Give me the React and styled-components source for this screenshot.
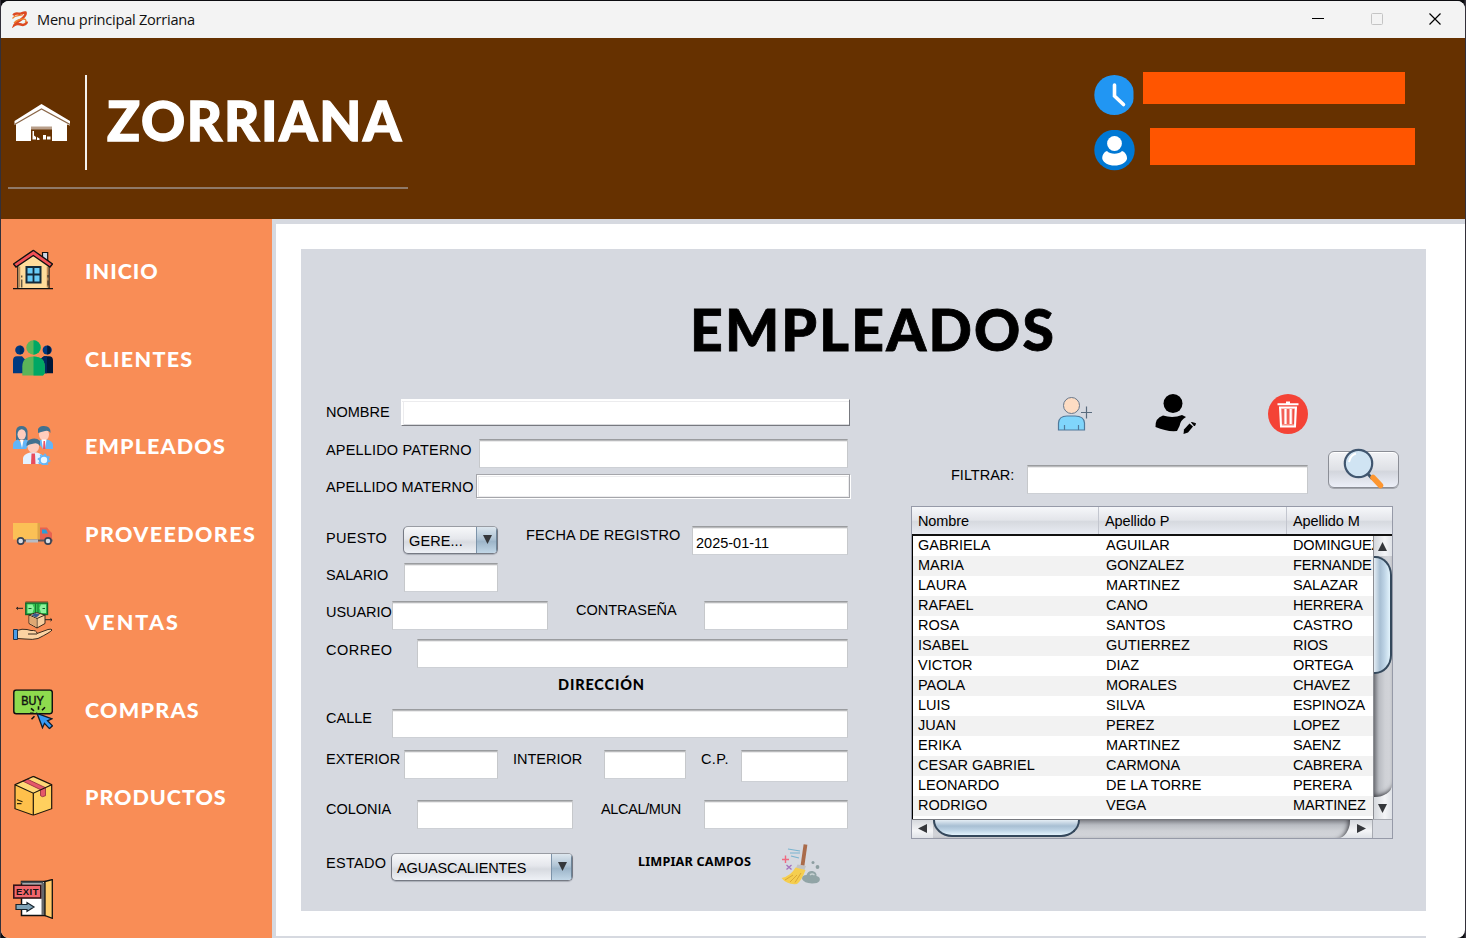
import React from "react";
import styled, { createGlobalStyle } from "styled-components";

const Global = createGlobalStyle`
  * { box-sizing: border-box; }
  html, body { margin: 0; padding: 0; background: #0c0c10; overflow: hidden; }
`;

const grey = "#d6d9e0";

/* ---------- window frame ---------- */
const Desktop = styled.div`
  width: 1466px;
  height: 938px;
  padding: 1px 1px 0 1px;
  background: linear-gradient(to right, #33303a 0 1px, #0c0c10 1px 1464px, #33303a 1465px);
  font-family: "Liberation Sans", Arial, sans-serif;
  color: #000;
`;
const Window = styled.div`
  display: flex;
  flex-direction: column;
  height: 937px;
  border-radius: 8px;
  overflow: hidden;
  background: #fff;
`;
const TitleBar = styled.header`
  flex: none;
  display: flex;
  align-items: center;
  height: 37px;
  padding: 0 24px 2px 10px;
  background: #f3f3f3;
`;
const TitleText = styled.span`
  flex: 1;
  margin-left: 8px;
  font: 14.6px/20px "Open Sans", "Noto Sans", sans-serif;
  letter-spacing: -0.25px;
  color: #111;
`;
const WindowButtons = styled.div`
  display: flex;
  gap: 46.5px;
`;

/* ---------- brand header ---------- */
const Header = styled.section`
  flex: none;
  display: flex;
  justify-content: space-between;
  height: 181px;
  background: #663100;
`;
const Brand = styled.div`
  width: 400px;
  height: 151px;
  margin-left: 7px;
  padding: 37px 0 0 6px;
  border-bottom: 2px solid #8f7968;
  display: flex;
  align-items: flex-start;
`;
const BrandRule = styled.div`
  width: 2px;
  height: 95px;
  margin: 0 20px 0 15px;
  background: #f4f1ee;
`;
const BrandHouse = styled.div`
  width: 56px;
  height: 38px;
  margin-top: 29px;
`;
const BrandName = styled.div`
  margin-top: 15px;
  font: 900 54.5px/60px Lato, "Open Sans", sans-serif;
  letter-spacing: 1.7px;
  color: #fff;
  -webkit-text-stroke: 1.3px #fff;
  white-space: nowrap;
`;
const StatusList = styled.div`
  width: 371px;
  padding-top: 34px;
`;
const StatusRow = styled.div`
  display: flex;
  align-items: flex-start;
  height: 56px;
`;
const StatusIcon = styled.div`
  width: 41px;
  height: 41px;
  margin-top: ${(p) => p.$top}px;
`;
const StatusBar = styled.div`
  width: ${(p) => p.$w}px;
  height: ${(p) => p.$h}px;
  margin-left: ${(p) => p.$gap}px;
  background: #ff5500;
`;

/* ---------- main split ---------- */
const Main = styled.div`
  flex: 1;
  display: flex;
  min-height: 0;
`;
const Sidebar = styled.nav`
  flex: none;
  width: 271px;
  padding-top: 8px;
  background: #f98d56;
`;
const NavItem = styled.div`
  display: flex;
  align-items: center;
  height: 87.75px;
  padding-left: 12px;
`;
const NavIcon = styled.div`
  flex: none;
  width: 40px;
  height: 40px;
  margin-right: 32px;
  transform: translateY(${(p) => p.$shift || 0}px);
`;
const NavText = styled.span`
  font: 900 21.5px/28px Lato, "Open Sans", sans-serif;
  letter-spacing: ${(p) => p.$track}px;
  color: #fff;
  white-space: nowrap;
`;
const ExitItem = styled(NavItem)`
  height: 103px;
  padding-top: 12px;
`;
const Content = styled.main`
  flex: 1;
  display: flex;
  flex-direction: column;
  border-top: 5px solid ${grey};
  border-left: 4px solid ${grey};
  padding: 25px 39px 0 25px;
`;
const Panel = styled.section`
  height: 662px;
  background: ${grey};
`;
const BottomEdge = styled.div`
  height: 2px;
  margin: 25px 0 0 -25px;
  background: ${grey};
`;
const PageTitle = styled.h1`
  margin: 0 0 0 19px;
  padding-top: 45px;
  height: 143px;
  text-align: center;
  font: 900 57px/70px Lato, "Open Sans", sans-serif;
  letter-spacing: 2.2px;
  -webkit-text-stroke: 0.8px #000;
`;
const Columns = styled.div`
  display: flex;
`;

/* ---------- form ---------- */
const Form = styled.div`
  width: 585px;
  padding: 7px 0 0 25px;
`;
const Row = styled.div`
  display: flex;
  align-items: flex-start;
  height: ${(p) => p.$h}px;
`;
const Label = styled.label`
  flex: none;
  width: ${(p) => p.$w}px;
  margin-top: ${(p) => p.$top}px;
  font-size: 14.5px;
  line-height: 18px;
  letter-spacing: ${(p) => p.$track || 0}px;
  white-space: nowrap;
`;
const Field = styled.div`
  flex: none;
  width: ${(p) => p.$w - 2}px;
  height: ${(p) => p.$h || 29}px;
  margin: 0 ${(p) => (p.$gap || 0) + 1}px 0 1px;
  padding: 7px 0 0 3px;
  font-size: 14.5px;
  line-height: 18px;
  background: #fff;
  border: 1px solid #c6c8cb;
  border-top-color: #9a9c9f;
  border-bottom-color: #cdd0d5;
  box-shadow: inset 0 1px 0 #b9babc, inset 0 2px 0 #ebebec;
`;
const RaisedField = styled.div`
  width: 449px;
  height: 27px;
  background: #fff;
  border: 1px solid #fff;
  border-right-color: #77797f;
  border-bottom-color: #77797f;
  box-shadow: inset 0 1px 0 #fff, inset 0 2px 0 #ececee, inset 1px 0 0 #fff, inset 2px 0 0 #ececee, inset 0 -1px 0 #d9dadd;
`;
const EtchedField = styled.div`
  width: 374px;
  height: 24px;
  background: #fff;
  border: 1px solid #a5a6ab;
  box-shadow: 1px 1px 0 #fff, inset 1px 1px 0 #fff, inset 2px 2px 0 #ececee, inset -1px -1px 0 #ececee;
`;
const Combo = styled.div`
  flex: none;
  display: flex;
  width: ${(p) => p.$w}px;
  height: 28px;
  margin-right: ${(p) => p.$gap || 0}px;
  border: 1px solid #767a84;
  border-top-color: #999ca3;
  border-radius: 5px;
  box-shadow: 0 1px 1px #a9adb6;
  background: linear-gradient(#f7f8fa, #e5e7ec 45%, #d7dae0 58%, #eef1f6);
  overflow: hidden;
`;
const ComboText = styled.span`
  flex: 1;
  padding: 5px 0 0 5px;
  font-size: 14.5px;
  line-height: 18px;
  letter-spacing: ${(p) => p.$track || 0}px;
`;
const ComboArrow = styled.span`
  width: 21px;
  border-left: 1px solid #7c93a9;
  background: linear-gradient(#dce6ee, #b0c4d5 45%, #9db5c9 56%, #c2d7e7);
  box-shadow: inset -1px 0 0 #6d8498;
  padding: 8px 0 0 6px;
  line-height: 0;
`;
const SectionTitle = styled.h2`
  margin: 0 0 0 232px;
  padding-top: 7px;
  height: 40px;
  font: 900 14.5px/18px Lato, "Open Sans", sans-serif;
  letter-spacing: 0.85px;
`;
const ClearText = styled.span`
  width: 143px;
  margin-top: -1px;
  font: bold 12.7px/18px "Noto Sans", "Open Sans", sans-serif;
  letter-spacing: 0.15px;
`;
const ClearIcon = styled.div`
  width: 40px;
  height: 42px;
  margin-top: -9px;
`;

/* ---------- list side ---------- */
const ListSide = styled.div`
  width: 490px;
  padding-left: 25px;
`;
const Actions = styled.div`
  display: flex;
  align-items: flex-start;
  height: 57px;
  padding: 2px 0 0 145px;
`;
const ActionIcon = styled.div`
  width: 41px;
  height: 41px;
  margin-right: ${(p) => p.$gap}px;
`;
const Filter = styled.div`
  display: flex;
  align-items: flex-start;
  height: 57px;
  padding-left: 40px;
`;
const FilterSlot = styled.div`
  padding-top: 16px;
`;
const SearchButton = styled.div`
  flex: none;
  width: 71px;
  height: 37px;
  margin: 2px 0 0 19px;
  border: 1px solid #8b8e96;
  border-radius: 6px;
  box-shadow: 0 1px 0 #a3a6ad, inset 0 1px 0 #fff;
  background: linear-gradient(#f2f3f6, #dfe1e6 50%, #d3d6dd 56%, #eceff8);
`;
const SearchGlyph = styled.div`
  width: 40px;
  height: 41px;
  margin: -4px 0 0 14px;
`;

/* ---------- table ---------- */
const TableBox = styled.div`
  width: 482px;
  height: 333px;
  border: 1px solid #969aa8;
`;
const TableHead = styled.div`
  display: grid;
  grid-template-columns: 187px 188px 1fr;
  height: 29px;
  background: linear-gradient(#f6f7fa, #e3e5ea 48%, #d6d9df 54%, #e9ecf3);
  border-bottom: 2px solid #111;
`;
const HeadCell = styled.span`
  padding: 5px 0 0 6px;
  font-size: 14.5px;
  line-height: 18px;
  letter-spacing: -0.1px;
  border-right: 1px solid ${(p) => (p.$last ? "transparent" : "#c3c6cf")};
`;
const TableMid = styled.div`
  display: flex;
  height: 283px;
`;
const Viewport = styled.div`
  width: 461px;
  border-left: 1px solid #000;
  background: #fff;
  overflow: hidden;
`;
const DataRow = styled.div`
  display: grid;
  grid-template-columns: 188px 187px 200px;
  width: 580px;
  height: 20px;
  padding-left: 5px;
  background: ${(p) => (p.$odd ? "#f2f2f2" : "#fff")};
`;
const Cell = styled.span`
  font-size: 14.5px;
  line-height: 19px;
  letter-spacing: ${(p) => p.$track}px;
  white-space: nowrap;
`;
const VScroll = styled.div`
  display: flex;
  flex-direction: column;
  width: 19px;
  border-left: 1px solid #8c8e94;
  background: linear-gradient(to right, #d5d8dd, #f4f5f7 60%, #dfe2e7);
`;
const ArrowBox = styled.div`
  flex: none;
  display: flex;
  align-items: center;
  justify-content: center;
  width: ${(p) => p.$w}px;
  height: ${(p) => p.$h}px;
`;
const VTrack = styled.div`
  flex: 1;
  border-bottom-right-radius: 18px 12px;
  background: linear-gradient(to right, #77797f, #b9bcc2 5px, #cfd1d6 11px, #d3d5da);
  box-shadow: inset 0 -4px 5px -3px #33343a;
`;
const VThumb = styled.div`
  width: 18px;
  height: 118px;
  border: 2px solid #34485c;
  border-left: 0;
  border-radius: 0 17px 17px 0 / 0 19px 19px 0;
  background: linear-gradient(to right, #e4edf4, #a8bfd3 6px, #bcd2e4 10px, #e2f3fc);
`;
const HScroll = styled.div`
  display: flex;
  height: 19px;
`;
const HBar = styled.div`
  display: flex;
  width: 461px;
  border-top: 1px solid #77797f;
  border-right: 1px solid #a8abb2;
  background: linear-gradient(#d5d8dd, #f4f5f7 60%, #dfe2e7);
`;
const HTrack = styled.div`
  flex: 1;
  border-bottom-right-radius: 12px 18px;
  background: linear-gradient(#85878d, #b9bcc2 5px, #cfd1d6 11px, #d3d5da);
  box-shadow: inset -4px 0 5px -3px #33343a;
`;
const HThumb = styled.div`
  width: 147px;
  height: 17px;
  border: 2px solid #34485c;
  border-top: 0;
  border-radius: 0 0 19px 19px / 0 0 17px 17px;
  background: linear-gradient(#e4edf4, #a8bfd3 6px, #bcd2e4 10px, #e2f3fc);
`;
const Corner = styled.div`
  flex: 1;
  border-top: 1px solid #a8abb2;
`;

/* ---------- drawings ---------- */
const SvgBlock = styled.svg`
  display: block;
`;
const Svg = ({ w = 40, h = 40, vb, children }) => (
  <SvgBlock width={w} height={h} viewBox={vb || `0 0 ${w} ${h}`}>
    {children}
  </SvgBlock>
);

const Tri = ({ d }) => {
  const paths = {
    up: "M5 0L10 10H0Z",
    down: "M0 0H10L5 10Z",
    left: "M0 5L10 0V10Z",
    right: "M0 0L10 5L0 10Z",
  };
  return (
    <Svg w={9} h={9} vb="0 0 10 10">
      <path d={paths[d]} fill="#35373b" />
    </Svg>
  );
};

const AppLogo = () => (
  <Svg w={18} h={18}>
    <rect width="18" height="18" fill="#edf7f8" />
    <path d="M2.500 5.500C3.500 2.800 6 3.400 8 3.700C10.500 4 12 2 14.500 2.500C15.500 5 13 7 10.500 9.300C7.500 11.700 4.500 12.500 3.500 15C6 13.300 8.500 14 11 14.800C13 15.300 15.500 14 16 11.500" fill="none" stroke="#dc4a22" strokeWidth="2.500" />
    <path d="M1.500 8.500C4 4.500 8 6.500 12 4.500M3 13C6 10 9 9 12.500 9C15.500 9 15.500 11.500 14 12.500" fill="none" stroke="#f0822f" strokeWidth="1.300" />
  </Svg>
);

const Barn = () => (
  <Svg w={56} h={38}>
    <path d="M0.500 17L27.500 0L56 17V21.500L53 20.500V37H38V23H17V37H2V20L0.500 21Z" fill="#fff" />
    <path d="M0.500 20.500L27.500 5L56 20.500" fill="none" stroke="#8b6748" strokeWidth="1.200" />
    <path d="M17 22.500H38V25.500H17Z" fill="#b89f8b" />
    <path d="M18.500 27H20V31.500L22 33V35.500H18.500ZM23 33L25.500 34.500V36H23ZM29 31H32V35.500H29ZM33 32.500H36.500V35.500H33Z" fill="#fff" />
  </Svg>
);

const Clock = () => (
  <Svg w={41} h={41}>
    <clipPath id="clk"><rect width="39.500" height="41" /></clipPath>
    <circle cx="20.300" cy="20" r="20" fill="#2196f3" clipPath="url(#clk)" />
    <path d="M20.500 10V21L29.500 29.500" fill="none" stroke="#fff" strokeWidth="3.600" strokeLinecap="round" />
  </Svg>
);

const UserDisc = () => (
  <Svg w={41} h={41}>
    <circle cx="20.500" cy="20" r="20.200" fill="#0078d4" />
    <path d="M13 21C10 22 8 25 8.300 29C10 33 14 35.500 20.500 35.500S31.500 33 33 29C33.300 25 31 22 28 21C25 24.500 16 24.500 13 21Z" fill="#fff" />
    <circle cx="20.500" cy="13.500" r="7.400" fill="#fff" />
  </Svg>
);

const HouseIcon = () => (
  <Svg>
    <path d="M29.500 10V3H34.700V14" fill="#ccd6e6" stroke="#111" strokeWidth="1.200" />
    <path d="M4.800 14L20.300 4L36 14V39H4.800Z" fill="#ffdc9b" stroke="#111" strokeWidth="1.200" />
    <path d="M6.500 17V38M34.500 17V38" stroke="#c08a55" strokeWidth="1.500" fill="none" />
    <path d="M0.500 14.500L20.300 0.800L39.500 14.500L37 17.500L20.300 6L3 17.500Z" fill="#f25156" stroke="#111" strokeWidth="1.400" />
    <rect x="13.500" y="17.500" width="14" height="15.500" fill="#69ccf6" stroke="#142a3a" strokeWidth="2" />
    <path d="M20.500 17V33M13 25H28" stroke="#142a3a" strokeWidth="1.800" />
    <path d="M0 39.300H40" stroke="#111" strokeWidth="1.400" />
    <path d="M8.800 26V28M8.800 30V38M35 25.500V28M35 31V36" stroke="#222" strokeWidth="1" />
  </Svg>
);

const ClientsIcon = () => (
  <Svg>
    <circle cx="6.800" cy="11.500" r="4.600" fill="#003a80" />
    <path d="M6.800 7A4.600 4.600 0 0 1 6.800 16Z" fill="#002a60" />
    <circle cx="34.200" cy="11.500" r="4.600" fill="#003a80" />
    <path d="M34.200 7A4.600 4.600 0 0 1 34.200 16Z" fill="#001738" />
    <path d="M0 34.700V22Q0 17.700 4 17.700H9L12 21V34.700Z" fill="#003a80" />
    <path d="M28 34.700V20L31 17.700H36Q40 17.700 40 22V34.700Z" fill="#001738" />
    <path d="M28 34.700V20L31 17.700H34V34.700Z" fill="#002a60" />
    <circle cx="20.500" cy="9" r="7.200" fill="#5cb459" />
    <path d="M20.500 1.800A7.200 7.200 0 0 1 20.500 16.200Z" fill="#00a764" />
    <path d="M9.300 37V28Q9.300 18 20.500 18T31.700 28V35L30 37Z" fill="#5cb459" />
    <path d="M20.500 18Q31.700 18 31.700 28V35L30 37H20.500Z" fill="#00a764" />
  </Svg>
);

const StaffIcon = () => (
  <Svg>
    <path d="M3 15V6Q3.500 1 8.500 1T14.500 6V15Z" fill="#41718f" />
    <ellipse cx="8.700" cy="9.500" rx="4.200" ry="5.200" fill="#ffcdbd" />
    <path d="M0 24V19Q1 15.500 5 14.500L8.500 18L12 14.500Q16 15 17 18L13 24Z" fill="#64b5f6" />
    <path d="M7 15H10.500L9 23Z" fill="#fff" />
    <ellipse cx="31" cy="9.500" rx="5" ry="6" fill="#ffcdbd" />
    <path d="M25 8V4Q27 0.500 31 1Q38 1 37.500 8Q36 5 32 6Q28 7 25 8Z" fill="#41718f" />
    <path d="M24.500 17L28 14.500L31 17L34 14.500Q40 16 40 20V24H30Z" fill="#64b5f6" />
    <path d="M28.500 14.500H33.500L32 24H30Z" fill="#fff" />
    <path d="M30.500 16H32L32.500 24H30Z" fill="#ef5362" />
    <ellipse cx="20.300" cy="21.500" rx="5.800" ry="6.500" fill="#ffcdbd" />
    <path d="M13.500 21Q13 16 17 14.500Q23 12 27 16L27 21Q25 17.500 21 18.500Q16 19 13.500 21Z" fill="#41718f" />
    <path d="M10 39V33Q10.500 29 17 27.500H24Q30 29 30 33V39Z" fill="#e4f2ff" />
    <path d="M18.500 28.500H22L22.500 39H18Z" fill="#e84d5d" />
    <circle cx="31" cy="35" r="4.200" fill="#e8f6ff" stroke="#64b5f6" strokeWidth="2" />
    <circle cx="31" cy="35" r="5.700" fill="none" stroke="#64b5f6" strokeWidth="1.400" strokeDasharray="2 2.400" />
  </Svg>
);

const TruckIcon = () => (
  <Svg>
    <rect x="0" y="8.500" width="26" height="16.500" fill="#fbc056" />
    <rect x="24.500" y="8.500" width="2.500" height="16.500" fill="#dea447" />
    <path d="M27 13H34Q37 17 39 18.500V26H27Z" fill="#e8624f" />
    <path d="M29 15H33L35 19H29Z" fill="#2e9bd6" />
    <path d="M4 25H39.500V27H4Z" fill="#5b5b62" />
    <path d="M13 25H25V28H13Z" fill="#b8bdc6" />
    <circle cx="7.700" cy="26.500" r="3.100" fill="#d9dde4" stroke="#3a4354" strokeWidth="1.600" />
    <circle cx="35" cy="26.500" r="3.100" fill="#d9dde4" stroke="#3a4354" strokeWidth="1.600" />
  </Svg>
);

const SalesIcon = () => (
  <Svg>
    <path d="M3.500 7.300H10M5 6L3.500 7.300L5 8.600M32 18.700H39M37.500 17.400L39 18.700L37.500 20" stroke="#222" strokeWidth="1" fill="none" />
    <path d="M12.500 0.500H35" stroke="#b6613a" strokeWidth="1" />
    <rect x="12.800" y="2" width="21.700" height="11.500" fill="#33c34f" stroke="#11632a" strokeWidth="1.400" />
    <path d="M14.500 3.500H19.500L21 7L19.500 12H14.500ZM33 3.500H28L26.500 7L28 12H33Z" fill="#8df29b" />
    <path d="M22.500 3V12M25 3V12" stroke="#157a30" strokeWidth="1" />
    <path d="M15.500 7.500H18.500M29.500 7.500H32" stroke="#11632a" strokeWidth="1.200" />
    <path d="M16 14L23.500 11.500L32 14V22.500L24 27L16 22.500Z" fill="#f9d0a0" stroke="#3b2a1d" strokeWidth="1" />
    <path d="M16 14L24 17.500L32 14M24 17.500V27" stroke="#3b2a1d" strokeWidth="1" fill="none" />
    <path d="M18.500 14.500L22 12L27 13.500L23.500 16.500Z" fill="#3a5a8c" />
    <path d="M16.500 15L23.500 18V26L16.500 22Z" fill="#dfa873" />
    <path d="M4 29.500Q9 27.500 14 28.500L18 29.500Q24 29 24 32.500L35 28.500Q39 27.500 39 29Q38 31 25 37.500Q20 39 12 38L4 37.500Z" fill="#fcd3a2" stroke="#3b2a1d" strokeWidth="1" />
    <path d="M15 33H24" stroke="#3b2a1d" strokeWidth="1" />
    <path d="M0.500 28.500H4.500V38.500H0.500Z" fill="#4a9ce8" stroke="#20364f" strokeWidth="1" />
  </Svg>
);

const BuyIcon = () => (
  <Svg>
    <rect x="0.800" y="0.800" width="38.500" height="23.700" rx="2.500" fill="#8edb4e" stroke="#111" strokeWidth="1.500" />
    <text x="8.300" y="16" textLength="22.500" lengthAdjust="spacingAndGlyphs" fontFamily="Liberation Sans" fontSize="13.500" fill="#111" stroke="#111" strokeWidth="0.500">BUY</text>
    <path d="M18 19L21 21.500M25.500 17V20.500M32 18L29 21M17 24H20.500M18.500 30L21.500 27" stroke="#111" strokeWidth="1.600" />
    <path d="M24 24L39 29.500L34.500 31.500L39.500 36.500L36.500 39.300L31.500 34L29.500 38.500Z" fill="#3699f5" stroke="#111c2a" strokeWidth="1.300" />
  </Svg>
);

const BoxIcon = () => (
  <Svg>
    <path d="M20.300 0.700L38.700 9V33L20.300 39.500L2 33V9Z" fill="#ffd05e" />
    <path d="M2 9L20.300 17.500V39.500L2 33Z" fill="#ffc04b" />
    <path d="M20.300 0.700L38.700 9L20.300 17.500L2 9Z" fill="#ffd877" />
    <path d="M10 5.500L14.500 3.500L32.500 12V20L29.500 21L27.500 20V14Z" fill="#e5586a" stroke="#8b2b3b" strokeWidth="0.800" />
    <path d="M20.300 0.700L38.700 9V33L20.300 39.500L2 33V9ZM2 9L20.300 17.500L38.700 9M20.300 17.500V39.500" fill="none" stroke="#1c160c" strokeWidth="1.200" />
    <path d="M4 24L9.500 26M4 28H8.500" stroke="#332409" strokeWidth="1.200" />
  </Svg>
);

const ExitIcon = () => (
  <Svg>
    <path d="M8.500 2.500H32V36.500H8.500Z" fill="#fff" stroke="#111" strokeWidth="1.500" />
    <path d="M8 3.500H30" stroke="#465058" strokeWidth="2" />
    <path d="M28.500 4H32V36H28.500Z" fill="#66686b" />
    <path d="M32 2.500L39.300 0.500V39.300L32 36.500Z" fill="#ffcb6b" stroke="#111" strokeWidth="1.300" />
    <rect x="0.800" y="6.200" width="27" height="12.800" fill="#f0666b" stroke="#351316" strokeWidth="1.600" />
    <text x="3" y="16.200" textLength="22.500" fontFamily="Liberation Sans" fontWeight="bold" fontSize="9.500" fill="#111">EXIT</text>
    <path d="M3 25.500H14V23.500L21 28L14 32.500V30.500H3Z" fill="#7fa3b8" stroke="#16222b" strokeWidth="1.200" />
  </Svg>
);

const AddUser = () => (
  <Svg w={41} h={41}>
    <circle cx="15.500" cy="11.500" r="8" fill="#fddcc3" stroke="#67778a" strokeWidth="1" />
    <path d="M2.500 36V29Q3 22 11 22H19Q28 22 28.500 29V36Z" fill="#80d5fb" stroke="#50799a" strokeWidth="1.200" />
    <path d="M8.500 31V36M22.500 31V36" stroke="#50799a" strokeWidth="1.200" />
    <path d="M30.500 12.500V24.500M25 18.500H36" stroke="#596b7d" strokeWidth="1.200" />
  </Svg>
);

const EditUser = () => (
  <Svg w={41} h={41}>
    <circle cx="18" cy="9.500" r="9.500" />
    <path d="M8 21.500Q18 24.500 27 21L31 23Q25.500 26 24.500 32L22 37Q12 38 0.500 33Q0 24 8 21.500Z" />
    <path d="M29 35.500L34.500 29.500L38 32.500L33 38.500L28.500 40Z" />
    <path d="M36.500 28.500L40.500 29.500L39.500 32Z" stroke="#000" strokeWidth="1" />
  </Svg>
);

const Trash = () => (
  <Svg w={41} h={41}>
    <circle cx="20" cy="20" r="20" fill="#f44336" />
    <path d="M9.500 10.300H30.500M18 8.500H22" stroke="#fff" strokeWidth="2" />
    <path d="M12 13.500H28L27 32.500H13Z" fill="#f9897f" stroke="#fff" strokeWidth="2" />
    <path d="M17.500 15V30M22.700 15V30" stroke="#fff" strokeWidth="2" />
    <path d="M20 15V30M15 15V30M25.300 15V30" stroke="#ee4c40" strokeWidth="1.300" />
  </Svg>
);

const Magnifier = () => (
  <Svg w={41} h={41}>
    <path d="M25 26L29.500 31" stroke="#40556b" strokeWidth="3" />
    <circle cx="15.500" cy="15.500" r="13.700" fill="#d0e4f3" stroke="#40566f" strokeWidth="2.200" />
    <path d="M6 14Q7.500 7 13 5.500" stroke="#fff" strokeWidth="2" fill="none" />
    <path d="M30 29.500L37.500 37.500" stroke="#fd9630" strokeWidth="5.500" strokeLinecap="round" />
  </Svg>
);

const Broom = () => (
  <Svg w={40} h={42}>
    <path d="M7 5L19 7M9 9H19M10 12L18 14" stroke="#79b4cf" strokeWidth="1.100" />
    <path d="M4.500 11.500V19M1 15.500H8" stroke="#f0697f" strokeWidth="1.400" />
    <path d="M5.500 21L10.500 25.500M10.500 21L5.500 25.500" stroke="#a573bd" strokeWidth="1.300" />
    <path d="M24.500 0.500L21.500 21.500" stroke="#aa6b4a" strokeWidth="3.800" />
    <path d="M16.500 20.500L25 22L23.500 26L15 24Z" fill="#c1c2c4" />
    <path d="M14.500 23.500L24.500 26Q21 36 16 40Q6 41 0.500 34Q10 32 14.500 23.500Z" fill="#f5ce4f" />
    <path d="M4 36L12 31M9 38L16 31M14 38.500L20 29" stroke="#dba735" strokeWidth="1" fill="none" />
    <path d="M21 35Q21 31 25.500 31Q27 26.500 31.500 27Q36 28 35.500 32Q40 33 38.500 37Q37 39.500 31 39.500Q23 39 21 35Z" fill="#91a4a6" />
    <path d="M29 31Q31 29 33.500 31" stroke="#c9d3d4" strokeWidth="1.300" fill="none" />
    <circle cx="32" cy="18.500" r="1.500" fill="#8d9ea1" />
    <circle cx="36.500" cy="23" r="1.900" fill="#8d9ea1" />
  </Svg>
);

/* ---------- data ---------- */
const nav = [
  ["INICIO", HouseIcon, 1, -1.5],
  ["CLIENTES", ClientsIcon, 1.3, -0.5],
  ["EMPLEADOS", StaffIcon, 1.15, -1],
  ["PROVEEDORES", TruckIcon, 1.4, 0.5],
  ["VENTAS", SalesIcon, 2.1, -1],
  ["COMPRAS", BuyIcon, 1.25, -0.7],
  ["PRODUCTOS", BoxIcon, 0.95, -1.3],
];

const employees = [
  ["GABRIELA", "AGUILAR", "DOMINGUEZ"],
  ["MARIA", "GONZALEZ", "FERNANDE"],
  ["LAURA", "MARTINEZ", "SALAZAR"],
  ["RAFAEL", "CANO", "HERRERA"],
  ["ROSA", "SANTOS", "CASTRO"],
  ["ISABEL", "GUTIERREZ", "RIOS"],
  ["VICTOR", "DIAZ", "ORTEGA"],
  ["PAOLA", "MORALES", "CHAVEZ"],
  ["LUIS", "SILVA", "ESPINOZA"],
  ["JUAN", "PEREZ", "LOPEZ"],
  ["ERIKA", "MARTINEZ", "SAENZ"],
  ["CESAR GABRIEL", "CARMONA", "CABRERA"],
  ["LEONARDO", "DE LA TORRE", "PERERA"],
  ["RODRIGO", "VEGA", "MARTINEZ"],
];
const tracking = [0, 0, -0.15];

export default function App() {
  return (
    <Desktop>
      <Global />
      <Window>
        <TitleBar>
          <AppLogo />
          <TitleText>Menu principal Zorriana</TitleText>
          <WindowButtons>
            <Svg w={12} h={12}><path d="M0 5.500H12" stroke="#000" strokeWidth="1" /></Svg>
            <Svg w={12} h={12}><rect x="0.500" y="0.500" width="11" height="11" rx="1" fill="none" stroke="#c4c4c4" /></Svg>
            <Svg w={12} h={12}><path d="M0.500 0.500L11.500 11.500M11.500 0.500L0.500 11.500" stroke="#000" strokeWidth="1.200" /></Svg>
          </WindowButtons>
        </TitleBar>

        <Header>
          <Brand>
            <BrandHouse><Barn /></BrandHouse>
            <BrandRule />
            <BrandName>ZORRIANA</BrandName>
          </Brand>
          <StatusList>
            <StatusRow>
              <StatusIcon $top={3}><Clock /></StatusIcon>
              <StatusBar $w={262} $h={32} $gap={8} />
            </StatusRow>
            <StatusRow>
              <StatusIcon $top={2}><UserDisc /></StatusIcon>
              <StatusBar $w={265} $h={37} $gap={15} />
            </StatusRow>
          </StatusList>
        </Header>

        <Main>
          <Sidebar>
            {nav.map(([text, Icon, track, shift]) => (
              <NavItem key={text}>
                <NavIcon $shift={shift}><Icon /></NavIcon>
                <NavText $track={track}>{text}</NavText>
              </NavItem>
            ))}
            <ExitItem><NavIcon><ExitIcon /></NavIcon></ExitItem>
          </Sidebar>

          <Content>
            <Panel>
              <PageTitle>EMPLEADOS</PageTitle>
              <Columns>
                <Form>
                  <Row $h={40}>
                    <Label $w={75} $top={4}>NOMBRE</Label>
                    <RaisedField />
                  </Row>
                  <Row $h={35}>
                    <Label $w={152} $top={2} $track={0.17}>APELLIDO PATERNO</Label>
                    <Field $w={371} />
                  </Row>
                  <Row $h={52}>
                    <Label $w={150} $top={4} $track={0.07}>APELLIDO MATERNO</Label>
                    <EtchedField />
                  </Row>
                  <Row $h={37}>
                    <Label $w={77} $top={3} $track={0.3}>PUESTO</Label>
                    <Combo $w={95} $gap={28}>
                      <ComboText $track={0.1}>GERE...</ComboText>
                      <ComboArrow><Tri d="down" /></ComboArrow>
                    </Combo>
                    <Label $w={165} $top={0} $track={0.13}>FECHA DE REGISTRO</Label>
                    <Field $w={158}>2025-01-11</Field>
                  </Row>
                  <Row $h={38}>
                    <Label $w={77} $top={3} $track={-0.1}>SALARIO</Label>
                    <Field $w={96} />
                  </Row>
                  <Row $h={38}>
                    <Label $w={65} $top={2} $track={-0.05}>USUARIO</Label>
                    <Field $w={158} $gap={27} />
                    <Label $w={127} $top={0}>CONTRASEÑA</Label>
                    <Field $w={146} />
                  </Row>
                  <Row $h={30}>
                    <Label $w={90} $top={2} $track={0.5}>CORREO</Label>
                    <Field $w={433} />
                  </Row>
                  <SectionTitle>DIRECCIÓN</SectionTitle>
                  <Row $h={41}>
                    <Label $w={65} $top={0}>CALLE</Label>
                    <Field $w={458} />
                  </Row>
                  <Row $h={50}>
                    <Label $w={77} $top={0}>EXTERIOR</Label>
                    <Field $w={96} $gap={14} />
                    <Label $w={90} $top={0}>INTERIOR</Label>
                    <Field $w={84} $gap={14} />
                    <Label $w={39} $top={0} $track={0.4}>C.P.</Label>
                    <Field $w={109} $h={32} />
                  </Row>
                  <Row $h={53}>
                    <Label $w={90} $top={0}>COLONIA</Label>
                    <Field $w={158} $gap={27} />
                    <Label $w={102} $top={0} $track={-0.35}>ALCAL/MUN</Label>
                    <Field $w={146} />
                  </Row>
                  <Row $h={30}>
                    <Label $w={65} $top={1} $track={0.3}>ESTADO</Label>
                    <Combo $w={182} $gap={65}>
                      <ComboText $track={-0.15}>AGUASCALIENTES</ComboText>
                      <ComboArrow><Tri d="down" /></ComboArrow>
                    </Combo>
                    <ClearText>LIMPIAR CAMPOS</ClearText>
                    <ClearIcon><Broom /></ClearIcon>
                  </Row>
                </Form>

                <ListSide>
                  <Actions>
                    <ActionIcon $gap={58}><AddUser /></ActionIcon>
                    <ActionIcon $gap={72}><EditUser /></ActionIcon>
                    <ActionIcon $gap={0}><Trash /></ActionIcon>
                  </Actions>
                  <Filter>
                    <Label $w={75} $top={17}>FILTRAR:</Label>
                    <FilterSlot><Field $w={283} /></FilterSlot>
                    <SearchButton><SearchGlyph><Magnifier /></SearchGlyph></SearchButton>
                  </Filter>
                  <TableBox>
                    <TableHead>
                      <HeadCell>Nombre</HeadCell>
                      <HeadCell>Apellido P</HeadCell>
                      <HeadCell $last>Apellido M</HeadCell>
                    </TableHead>
                    <TableMid>
                      <Viewport>
                        {employees.map((row, i) => (
                          <DataRow key={row[0]} $odd={i % 2 === 1}>
                            {row.map((value, j) => <Cell key={j} $track={tracking[j]}>{value}</Cell>)}
                          </DataRow>
                        ))}
                      </Viewport>
                      <VScroll>
                        <ArrowBox $w={17} $h={20}><Tri d="up" /></ArrowBox>
                        <VTrack><VThumb /></VTrack>
                        <ArrowBox $w={17} $h={22}><Tri d="down" /></ArrowBox>
                      </VScroll>
                    </TableMid>
                    <HScroll>
                      <HBar>
                        <ArrowBox $w={21} $h={17}><Tri d="left" /></ArrowBox>
                        <HTrack><HThumb /></HTrack>
                        <ArrowBox $w={22} $h={17}><Tri d="right" /></ArrowBox>
                      </HBar>
                      <Corner />
                    </HScroll>
                  </TableBox>
                </ListSide>
              </Columns>
            </Panel>
            <BottomEdge />
          </Content>
        </Main>
      </Window>
    </Desktop>
  );
}
